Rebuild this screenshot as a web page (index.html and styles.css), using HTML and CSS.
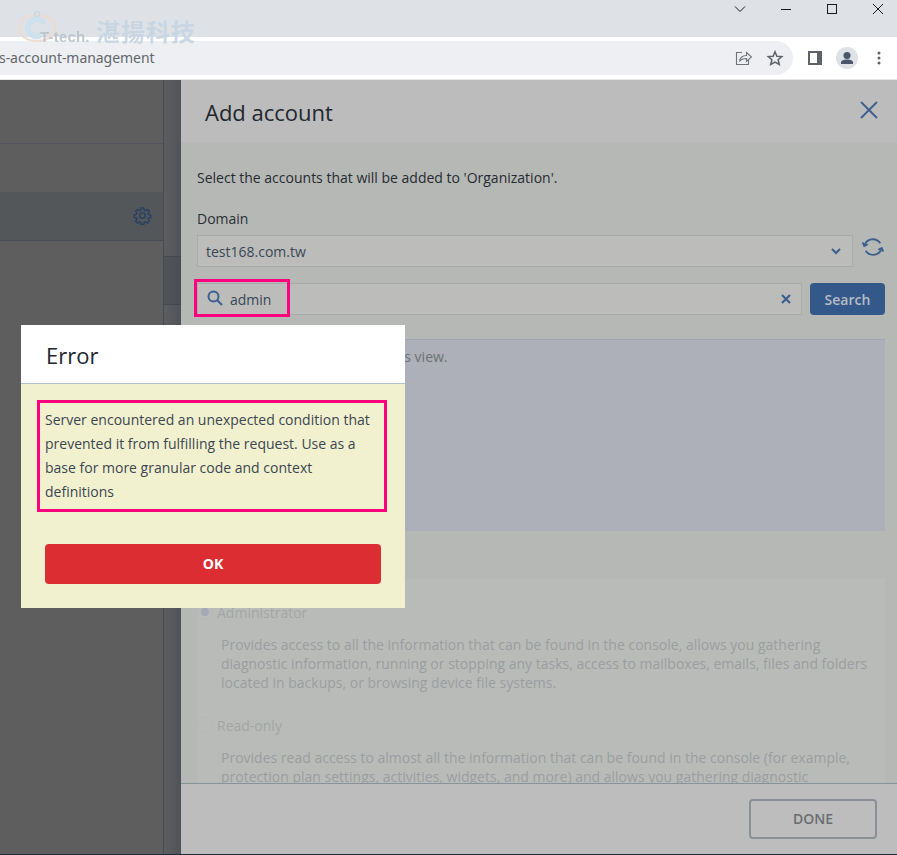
FILE: index.html
```html
<!DOCTYPE html>
<html lang="en">
<head>
<meta charset="utf-8">
<title>Add account</title>
<link rel="stylesheet" href="styles.css">
</head>
<body>
<div class="page">
  <header class="titlebar">
    <span class="win"><svg width="12" height="8" viewBox="0 0 12 8"><path d="M1 1.500l5 5 5-5" class="win-line"/></svg></span>
    <span class="win"><svg width="12" height="12" viewBox="0 0 12 12"><path d="M1 6.500h10" class="win-line"/></svg></span>
    <span class="win"><svg width="12" height="12" viewBox="0 0 12 12"><rect x="1.500" y="1.500" width="9" height="9" class="win-line"/></svg></span>
    <span class="win"><svg width="12" height="12" viewBox="0 0 12 12"><path d="M1 1l10 10M11 1L1 11" class="win-line"/></svg></span>
  </header>
  <div class="toolbar">
    <div class="omnibox">
      <span class="url">s-account-management</span>
      <span class="tool"><svg width="18" height="18" viewBox="0 0 18 18"><path d="M8 3.500H2.500v12h12V11" class="tool-line"/><path d="M5.500 12.500c.5-4 3-6 7-6V3.500l5 4.500-5 4.300V9.500c-3 0-5.500.8-7 3z" class="tool-line"/></svg></span>
      <span class="tool"><svg width="18" height="18" viewBox="0 0 18 18"><path d="M9 2.700l1.900 4.500 4.900.4-3.700 3.200 1.200 4.700L9 13l-4.300 2.500 1.200-4.700-3.700-3.200 4.900-.4z" class="tool-line star"/></svg></span>
    </div>
    <div class="tools">
      <span class="tool"><svg width="14" height="14" viewBox="0 0 14 14"><rect width="14" height="14" fill="#5f6368"/><rect x="2" y="2" width="7" height="10" fill="#fff"/></svg></span>
      <span class="tool"><svg width="22" height="22" viewBox="0 0 22 22"><circle cx="11" cy="11" r="11" fill="#dee1e6"/><circle cx="11" cy="8.500" r="3.500" fill="#49566b"/><path d="M5 17v-1.500c0-2 2.500-3 6-3s6 1 6 3V17z" fill="#49566b"/></svg></span>
      <span class="tool"><svg width="4" height="14" viewBox="0 0 4 14"><circle cx="2" cy="2" r="1.500" fill="#5f6368"/><circle cx="2" cy="7" r="1.500" fill="#5f6368"/><circle cx="2" cy="12" r="1.500" fill="#5f6368"/></svg></span>
    </div>
  </div>

  <div class="watermark">
    <svg class="wm-logo" width="44" height="34" viewBox="0 0 44 34"><ellipse cx="21" cy="18" rx="18" ry="13" fill="none" stroke="#ecdcd2" stroke-width="2.500"/><path d="M28 14a8.500 8.500 0 1 0-3 11" fill="none" stroke="#cde1ee" stroke-width="6"/><circle cx="21" cy="4" r="2.500" fill="none" stroke="#c5d9e8" stroke-width="1.500"/></svg>
    <span class="wm-latin">T-tech.</span>
    <span class="wm-cjk">湛揚科技</span>
  </div>

  <main class="app">
    <aside class="sidebar">
      <div class="side-top"></div>
      <div class="side-row">
        <svg width="19" height="19" viewBox="0 0 24 24" class="gear"><path d="M10.300 2.500h3.400l.5 2.800 1.700.7 2.300-1.600 2.400 2.400-1.600 2.300.7 1.700 2.800.5v3.400l-2.800.5-.7 1.700 1.600 2.300-2.400 2.400-2.300-1.600-1.700.7-.5 2.800h-3.400l-.5-2.800-1.700-.7-2.300 1.600-2.400-2.400 1.600-2.300-.7-1.700-2.800-.5v-3.400l2.800-.5.7-1.700-1.600-2.300 2.400-2.400 2.300 1.600 1.700-.7z" /><circle cx="12" cy="12" r="3.500"/></svg>
      </div>
    </aside>
    <div class="strip">
      <div class="strip-band"></div>
    </div>
    <section class="panel">
      <div class="panel-head">
        <h1 class="panel-title">Add account</h1>
        <svg width="20" height="20" viewBox="0 0 20 20" class="panel-close"><path d="M2 2l16 16M18 2L2 18"/></svg>
      </div>
      <div class="panel-body">
        <p class="intro">Select the accounts that will be added to 'Organization'.</p>
        <label class="field-label">Domain</label>
        <div class="domain-row">
          <div class="select">
            <span>test168.com.tw</span>
            <svg width="10" height="7" viewBox="0 0 10 7" class="blue-line"><path d="M1 1l4 4 4-4"/></svg>
          </div>
          <svg width="22" height="22" viewBox="0 0 24 24" class="blue-line refresh"><path d="M2.500 10.500C4 6 7.500 3.500 12 3.500c3.500 0 6 1.500 8 4.500M21.500 13.500c-1.500 4.500-5 7-9.500 7-3.500 0-6-1.500-8-4.500"/><path d="M.8 7l1.700 3.800L6.300 9M23.200 17l-1.700-3.800L17.700 15"/></svg>
        </div>
        <div class="search-row">
          <div class="search">
            <svg width="16" height="16" viewBox="0 0 16 16" class="blue-line search-icon"><circle cx="6.500" cy="6.500" r="5"/><path d="M10.200 10.200L15 15"/></svg>
            <span class="search-value">admin</span>
            <svg width="10" height="10" viewBox="0 0 10 10" class="blue-line search-clear"><path d="M1 1l8 8M9 1L1 9"/></svg>
          </div>
          <button class="search-btn">Search</button>
          <div class="mark-search"></div>
        </div>
        <div class="info">No accounts are shown in this view.</div>
        <div class="roles">
          <div class="role-name"><span class="radio on"></span>Administrator</div>
          <p class="role-desc">Provides access to all the information that can be found in the console, allows you gathering diagnostic information, running or stopping any tasks, access to mailboxes, emails, files and folders located in backups, or browsing device file systems.</p>
          <div class="role-name second"><span class="radio"></span>Read-only</div>
          <p class="role-desc">Provides read access to almost all the information that can be found in the console (for example, protection plan settings, activities, widgets, and more) and allows you gathering diagnostic information.</p>
        </div>
      </div>
      <div class="panel-foot">
        <button class="done">DONE</button>
      </div>
    </section>
  </main>

  <div class="dialog">
    <div class="dialog-head">Error</div>
    <div class="dialog-body">
      <p class="dialog-msg">Server encountered an unexpected condition that prevented it from fulfilling the request. Use as a base for more granular code and context definitions</p>
      <button class="ok">OK</button>
    </div>
  </div>
</div>
</body>
</html>
```

FILE: styles.css
```css
* { box-sizing: border-box; }
html, body { margin: 0; padding: 0; }
body { font-family: "Open Sans", "Noto Sans", sans-serif; font-size: 14px; color: #2e3338; background: #5e5e5e; }
p, h1 { margin: 0; }
button { font-family: inherit; cursor: pointer; }

.page { position: relative; width: 897px; height: 855px; overflow: hidden; display: flex; flex-direction: column; }

/* browser chrome */
.titlebar { height: 37px; flex: none; background: #dee1e6; display: flex; justify-content: flex-end; margin-right: -4px; }
.win { width: 46px; height: 18px; display: flex; align-items: center; justify-content: center; }
.win-line { fill: none; stroke: #1b1b1b; stroke-width: 1; }

.toolbar { height: 43px; flex: none; background: #fff; padding: 4px 0; display: flex; border-bottom: 1px solid #e6e6e6; }
.omnibox { width: 793px; height: 34px; background: #edeff2; border-radius: 0 17px 17px 0; display: flex; align-items: center; padding-right: 2px; }
.url { flex: 1; margin: -2px 0 0 -1px; color: #62666b; font-family: "Noto Sans", sans-serif; font-size: 14px; letter-spacing: -.05px; }
.tool { width: 32px; height: 34px; display: flex; align-items: center; justify-content: center; }
.tool-line { fill: none; stroke: #6f7377; stroke-width: 1.100; }
.tool-line.star { stroke: #5f6368; stroke-width: 1.500; }
.tools { display: flex; margin-left: 6px; }

/* watermark */
.watermark { position: absolute; left: 16px; top: 10px; height: 36px; display: flex; align-items: flex-end; filter: blur(.5px); opacity: .9; }
.wm-logo { position: absolute; left: 0; top: 0; z-index: -1; }
.wm-latin { margin-left: 24px; font-family: "Liberation Sans", sans-serif; font-weight: 700; font-size: 15px; line-height: 20px; color: #b9c2ca; width: 56px; letter-spacing: .2px; margin-bottom: -1px; }
.wm-cjk { font-family: "Noto Sans CJK TC", sans-serif; font-weight: 700; font-size: 24px; line-height: 30px; letter-spacing: 1px; color: #c6d5e4; margin-bottom: 0; }

/* app */
.app { flex: 1; display: flex; min-height: 0; border-bottom: 1px solid #1f2b38; }
.sidebar { width: 164px; flex: none; background: #5e5e5e; border-right: 1px solid #474c52; }
.side-top { height: 64px; border-bottom: 1px solid #50545a; }
.side-row { margin-top: 48px; height: 49px; background: #54575a; border-bottom: 1px solid #474c52; display: flex; align-items: center; justify-content: flex-end; padding-right: 11px; }
.gear { fill: none; stroke: #2b4261; stroke-width: 2; stroke-linejoin: round; margin-bottom: 2px; }
.strip { width: 17px; flex: none; background: linear-gradient(90deg, #5c5d5f, #505358); padding-top: 176px; }
.strip-band { height: 49px; background: linear-gradient(90deg, #515357, #4b4e54); border-top: 1px solid #44494f; border-bottom: 1px solid #44494f; }

.panel { flex: 1; min-width: 0; display: flex; flex-direction: column; background: #bdbdbd; }
.panel-head { height: 63px; flex: none; display: flex; align-items: center; justify-content: space-between; padding: 1px 18px 0 24px; background: #bcbcbc; border-bottom: 1px solid #b7b9b7; }
.panel-title { font-size: 22px; font-weight: 400; color: #22272d; }
.panel-close { fill: none; stroke: #3f6190; stroke-width: 2; margin-bottom: 3px; }

.panel-body { flex: 1; min-height: 0; overflow: hidden; background: #b6b8b6; padding: 25px 12px 0 16px; }
.intro { line-height: 20px; color: #262b30; }
.field-label { display: block; margin-top: 21px; line-height: 20px; color: #2b2f33; }
.domain-row { display: flex; align-items: center; margin-top: 6px; }
.select { width: 656px; height: 32px; flex: none; background: #bcbdbb; border: 1px solid #a9acaa; display: flex; align-items: center; justify-content: space-between; padding: 0 11px 0 8px; color: #3a4653; }
.blue-line { fill: none; stroke: #3c5f8e; stroke-width: 2; flex: none; }
.refresh { margin-left: 9px; margin-top: -8px; }
.search-row { position: relative; display: flex; margin-top: 16px; }
.search { width: 605px; height: 32px; flex: none; background: #bcbdbb; border: 1px solid #a9acaa; display: flex; align-items: center; padding: 0 10px 0 9px; color: #3a4653; }
.search-icon { margin-top: -2px; }
.search-value { flex: 1; margin-left: 7px; }
.search-clear { stroke-width: 2.200; }
.search-btn { margin-left: 8px; width: 75px; height: 32px; border: 0; border-radius: 4px; background: #335889; color: #b7bdc5; font-weight: 600; font-size: 14px; padding: 0; }
.mark-search { position: absolute; left: -3px; top: -4px; width: 96px; height: 38px; border: 3px solid #ff007f; }

.info { margin-top: 24px; height: 192px; background: #adb0b8; border-top: 1px solid #a2a5b0; padding: 7px 14px 7px 18px; line-height: 20px; color: #6e7175; }
.roles { margin-top: 47px; background: #b9bbb9; padding: 25px 16px 0 20px; height: 240px; }
.role-name { line-height: 20px; color: #a3a6a6; position: relative; }
.role-name.second { margin-top: 24px; }
.radio { position: absolute; left: -20px; top: 1px; width: 16px; height: 16px; border-radius: 50%; border: 1px solid #b6b8b7; }
.radio.on::after { content: ""; position: absolute; left: 3px; top: 3px; width: 8px; height: 8px; border-radius: 50%; background: #a6aab7; }
.role-desc { margin: 12px 0 0 4px; line-height: 19px; color: #9b9ea0; }

.panel-foot { height: 71px; flex: none; background: #bdbdbd; border-top: 1px solid #8a9299; display: flex; justify-content: flex-end; padding: 15px 20px 0 0; }
.done { width: 128px; height: 40px; background: transparent; border: 2px solid #8a9095; border-radius: 4px; color: #6a6d70; font-weight: 600; font-size: 14px; padding: 0 0 2px; }

/* error dialog */
.dialog { position: absolute; left: 21px; top: 325px; width: 384px; }
.dialog-head { height: 59px; background: #fff; border-bottom: 1px solid #b4c4d4; padding: 0 0 0 25px; font-size: 22px; line-height: 60px; color: #22272d; }
.dialog-body { height: 224px; background: #f2f1cf; padding: 16px 18px 0 16px; }
.dialog-msg { height: 112px; border: 3px solid #ff007f; padding: 5px; line-height: 24px; color: #3c4650; }
.ok { display: block; margin: 32px 6px 0 8px; width: 336px; height: 40px; border: 0; border-radius: 4px; background: #dc2d33; color: #fff; font-weight: 700; font-size: 14px; padding: 0 0 2px; }
```
